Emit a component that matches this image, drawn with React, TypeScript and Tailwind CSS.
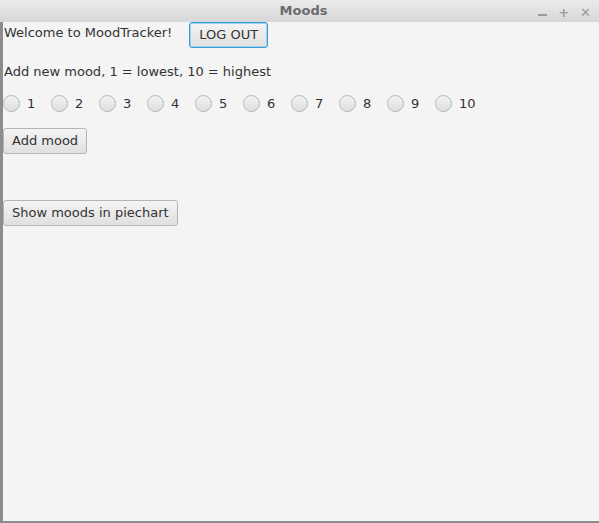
import React from "react"

const font = { fontFamily: '"DejaVu Sans", "Liberation Sans", sans-serif' }

function FxButton({ label, focused = false }: { label: string; focused?: boolean }) {
  return (
    <button
      className={
        focused
          ? "h-[26px] rounded-[3px] border border-[#3a9ad9] bg-gradient-to-b from-[#f4f4f4] to-[#e0e0e0] px-[9px] text-[13px] text-[#333] shadow-[inset_0_0_0_1px_#9fd2ef]"
          : "h-[26px] rounded-[3px] border border-[#b5b5b5] bg-gradient-to-b from-[#f4f4f4] to-[#e0e0e0] px-[8px] text-[13px] text-[#333]"
      }
    >
      {label}
    </button>
  )
}

function Radio({ n }: { n: number }) {
  return (
    <label className="flex w-[48px] items-center gap-[7px]">
      <span className="h-[17px] w-[17px] rounded-full border border-[#b8b8b8] bg-gradient-to-b from-[#f2f2f2] to-[#dedede]" />
      <span className="text-[13px] text-[#333]">{n}</span>
    </label>
  )
}

export default function App() {
  return (
    <div style={font} className="flex h-[523px] w-[599px] flex-col overflow-hidden bg-[#f4f4f4]">
      <div className="relative flex h-[22px] items-center justify-center bg-gradient-to-b from-[#ebebeb] to-[#d7d7d7]">
        <span className="ml-[8px] text-[13px] font-bold text-[#6c6c6c]">Moods</span>
        <div className="absolute right-[8px] top-[3px] flex items-center gap-[11px] text-[13px] font-bold text-[#9a9a9a]">
          <span className="mt-[4px] h-[2px] w-[9px] bg-[#9a9a9a]" />
          <span>+</span>
          <span>✕</span>
        </div>
      </div>
      <div className="flex flex-1 border-b-2 border-l-[3px] border-[#8c8c8c]">
        <div className="flex flex-col">
          <div className="flex items-start">
            <span className="ml-[1px] mt-[1px] text-[13px] text-[#333]">Welcome to MoodTracker!</span>
            <div className="ml-[17px]">
              <FxButton label="LOG OUT" focused />
            </div>
          </div>
          <span className="ml-[1px] mt-[14px] text-[13px] text-[#333]">Add new mood, 1 = lowest, 10 = highest</span>
          <div className="mt-[12px] flex">
            {[1, 2, 3, 4, 5, 6, 7, 8, 9, 10].map((n) => (
              <Radio key={n} n={n} />
            ))}
          </div>
          <div className="mt-[15px]">
            <FxButton label="Add mood" />
          </div>
          <div className="mt-[46px]">
            <FxButton label="Show moods in piechart" />
          </div>
        </div>
      </div>
    </div>
  )
}
